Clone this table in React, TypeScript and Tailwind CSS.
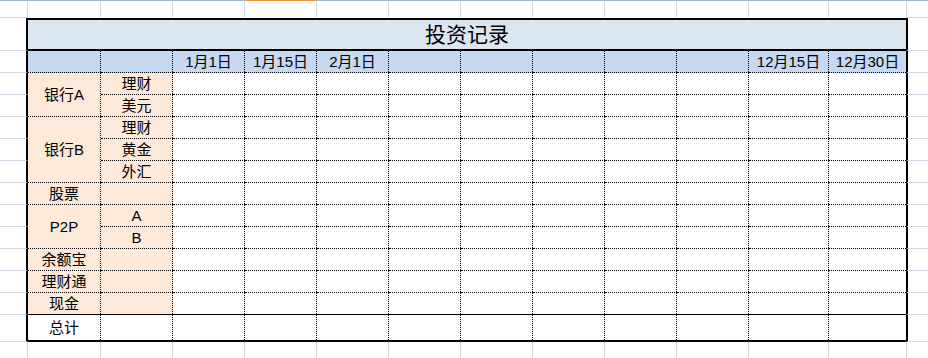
import React from 'react';

type Bottom = 'dotted' | 'solid' | 'thick';

function Cell({
  bottom,
  right,
  bg,
  span,
  children,
}: {
  bottom: Bottom;
  right: boolean;
  bg: string;
  span?: number;
  children?: React.ReactNode;
}) {
  const outer =
    bottom === 'dotted'
      ? 'border-b border-dotted border-b-black'
      : bottom === 'solid'
      ? 'border-b border-solid border-b-black'
      : 'border-b-2 border-solid border-b-black';
  const spanCls = span === 2 ? 'row-span-2' : span === 3 ? 'row-span-3' : '';
  const inner = right
    ? 'flex flex-1 items-center justify-center border-r border-dotted border-r-black'
    : 'flex flex-1 items-center justify-center';
  return (
    <div className={`flex ${outer} ${bg} ${spanCls}`}>
      <div className={inner}>{children}</div>
    </div>
  );
}

const dates = ['1月1日', '1月15日', '2月1日', '', '', '', '', '', '12月15日', '12月30日'];

type Row = { a?: { t: string; span?: number }; b?: string };
const rows: Row[] = [
  { a: { t: '银行A', span: 2 }, b: '理财' },
  { b: '美元' },
  { a: { t: '银行B', span: 3 }, b: '理财' },
  { b: '黄金' },
  { b: '外汇' },
  { a: { t: '股票' }, b: '' },
  { a: { t: 'P2P', span: 2 }, b: 'A' },
  { b: 'B' },
  { a: { t: '余额宝' }, b: '' },
  { a: { t: '理财通' }, b: '' },
  { a: { t: '现金' }, b: '' },
];

const LeftEdge = () => <div className="border-r-2 border-r-black border-b border-b-[#d0d7e5]" />;
const RightEdge = () => <div className="border-l-2 border-l-black border-b border-b-[#d0d7e5]" />;

export default function App() {
  const cells: React.ReactNode[] = [];

  // Row 0: above the table
  cells.push(
    <div key="t0" className="border-t border-t-[#9eb6ce] border-r border-r-[#d0d7e5] border-b border-b-[#d0d7e5]" />
  );
  for (let c = 1; c <= 12; c++) {
    let cls = 'border-t border-t-[#9eb6ce] border-r border-r-[#d0d7e5]';
    if (c === 4) cls = 'border-t border-t-[#f29436] border-r border-r-[#d0d7e5]';
    if (c === 12) cls = 'border-t border-t-[#9eb6ce]';
    cells.push(<div key={`t${c}`} className={cls} />);
  }
  cells.push(
    <div key="t13" className="border-t border-t-[#9eb6ce] border-l border-l-[#d0d7e5] border-b border-b-[#d0d7e5]" />
  );

  // Title row
  cells.push(<LeftEdge key="ti0" />);
  cells.push(
    <div
      key="title"
      className="col-span-12 flex items-center justify-center border-t-2 border-b-2 border-black bg-[#dce6f1] text-[21px] text-black"
    >
      投资记录
    </div>
  );
  cells.push(<RightEdge key="ti13" />);

  // Header row
  cells.push(<LeftEdge key="h0" />);
  cells.push(<Cell key="h1" bottom="dotted" right bg="bg-[#c5d9f1]" />);
  cells.push(<Cell key="h2" bottom="dotted" right bg="bg-[#c5d9f1]" />);
  dates.forEach((d, i) => {
    cells.push(
      <Cell key={`hd${i}`} bottom="dotted" right={i < dates.length - 1} bg="bg-[#c5d9f1]">
        {d}
      </Cell>
    );
  });
  cells.push(<RightEdge key="h13" />);

  // Data rows
  rows.forEach((r, ri) => {
    const bottom: Bottom = ri === rows.length - 1 ? 'solid' : 'dotted';
    cells.push(<LeftEdge key={`r${ri}l`} />);
    if (r.a) {
      const aBottom: Bottom = r.a.span ? 'dotted' : bottom;
      cells.push(
        <Cell key={`r${ri}a`} bottom={aBottom} right bg="bg-[#fde9d9]" span={r.a.span}>
          {r.a.t}
        </Cell>
      );
    }
    cells.push(
      <Cell key={`r${ri}b`} bottom={bottom} right bg="bg-[#fde9d9]">
        {r.b}
      </Cell>
    );
    dates.forEach((_, i) => {
      cells.push(
        <Cell key={`r${ri}d${i}`} bottom={bottom} right={i < dates.length - 1} bg="bg-white" />
      );
    });
    cells.push(<RightEdge key={`r${ri}r`} />);
  });

  // Total row
  cells.push(<LeftEdge key="sl" />);
  cells.push(
    <Cell key="sa" bottom="thick" right bg="bg-white">
      总计
    </Cell>
  );
  cells.push(<Cell key="sb" bottom="thick" right bg="bg-white" />);
  dates.forEach((_, i) => {
    cells.push(<Cell key={`sd${i}`} bottom="thick" right={i < dates.length - 1} bg="bg-white" />);
  });
  cells.push(<RightEdge key="sr" />);

  // Bottom row (below the table)
  cells.push(<div key="b0" className="border-r border-r-[#d0d7e5]" />);
  for (let c = 1; c <= 12; c++) {
    cells.push(<div key={`b${c}`} className={c === 12 ? '' : 'border-r border-r-[#d0d7e5]'} />);
  }
  cells.push(<div key="b13" className="border-l border-l-[#d0d7e5]" />);

  return (
    <div className="h-[358px] w-full overflow-hidden bg-white font-['Liberation_Sans','Noto_Sans_CJK_SC',sans-serif] text-[15px] leading-none text-black">
      <div className="grid h-full w-full grid-cols-[28px_73px_72px_72px_72px_72px_72px_72px_72px_72px_72px_80px_77px_1fr] grid-rows-[18px_33px_22px_repeat(11,22px)_27px_1fr]">
        {cells}
      </div>
    </div>
  );
}
